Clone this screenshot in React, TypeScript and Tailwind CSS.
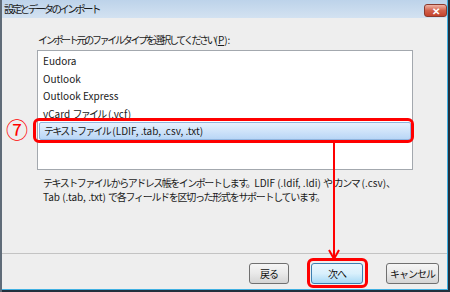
const items = ['Eudora', 'Outlook', 'Outlook Express', 'vCard ファイル (.vcf)', 'テキストファイル (LDIF, .tab, .csv, .txt)']

const CJK = /([\u3000-\u30ff\u4e00-\u9fff\uff00-\uffef]+)/

// Meiryo UI kana are narrower than Noto's full-width ones, so squeeze the CJK runs
function Jp({ text, cls = 'tracking-[-1.7px]' }: { text: string; cls?: string }) {
  return (
    <>
      {text.split(CJK).map((s, i) =>
        i % 2 ? (
          <span key={i} className={cls}>
            {s}
          </span>
        ) : (
          s
        ),
      )}
    </>
  )
}

function Btn({ label, w, primary = false }: { label: string; w: string; primary?: boolean }) {
  return (
    <div
      className={`${w} flex h-[21px] items-center justify-center rounded-[3px] border text-[10px] tracking-[-1px] text-[#111] ${
        primary
          ? 'border-[#3c7fb1] bg-gradient-to-b from-[#eaf6fd] via-[#d9f0fc] to-[#a7d9f5]'
          : 'border-[#707070] bg-gradient-to-b from-[#f6f6f6] via-[#e9e9e9] to-[#d4d4d4]'
      }`}
    >
      {label}
    </div>
  )
}

export default function App() {
  return (
    <div className="relative flex h-[292px] w-[450px] overflow-hidden bg-[#22303d] font-['Noto_Sans_CJK_JP',sans-serif]">
      <div className="w-[2px] bg-[#5f6b78]" />
      <div className="flex h-[290px] w-[446px] flex-col border-r border-b border-[#3fb0e2] bg-[#eeeeee]">
        {/* title bar */}
        <div className="flex h-[18px] items-center justify-between bg-gradient-to-b from-[#bdd3ea] to-[#d3e2f1] pl-[2px]">
          <span className="text-[10.5px] leading-none tracking-[-2.6px] text-[#1a1a1a]">設定とデータのインポート</span>
          <div className="mb-[1px] flex h-[13px] w-[23px] items-center justify-center self-end rounded-[3px] border border-[#8a3a2e] bg-gradient-to-b from-[#eeb3a6] via-[#d2614c] to-[#c4432c] text-[10px] font-bold leading-none text-white">
            ✕
          </div>
        </div>

        <div className="flex flex-1 flex-col">
          <div className="pl-[36px] pt-[14px] text-[10px] leading-[15px] text-[#1a1a1a]">
            <Jp text="インポート元のファイルタイプを選択してください" cls="tracking-[-2.3px]" />(
            <span className="underline">P</span>):
          </div>
          <div className="ml-[35px] mt-[3px] h-[120px] w-[376px] border border-[#a3a8ae] bg-white px-[1px] pt-[1px]">
            {items.map((it, i) => (
              <div
                key={it}
                className={`flex h-[17.5px] items-center whitespace-pre pl-[4px] text-[10px] text-[#1a1a1a] ${
                  i === 4 ? 'rounded-[2px] border border-[#8fb4de] bg-gradient-to-b from-[#e6f1fd] to-[#b9d6f6] pl-[3px]' : ''
                }`}
              >
                <Jp text={it} />
              </div>
            ))}
          </div>
          <div className="whitespace-pre pl-[41px] pt-[6px] text-[10px] leading-[14px] text-[#1a1a1a]">
            <div>
              <Jp text="テキストファイルからアドレス帳をインポートします。LDIF (.ldif, .ldi) や カンマ (.csv)、" cls="tracking-[-1.5px]" />
            </div>
            <div>
              <Jp text="Tab (.tab, .txt) で各フィールドを区切った形式をサポートしています。" cls="tracking-[-1.3px]" />
            </div>
          </div>
          <div className="flex-1" />
          <div className="border-t border-[#c3c3c3] shadow-[inset_0_1px_0_#ffffff]" />
          <div className="flex h-[35px] items-start pt-[9px]">
            <div className="ml-[247px]">
              <Btn label="戻る" w="w-[40px]" />
            </div>
            <div className="ml-[22px]">
              <Btn label="次へ" w="w-[52px]" primary />
            </div>
            <div className="ml-[23px]">
              <Btn label="キャンセル" w="w-[53px]" />
            </div>
          </div>
        </div>
      </div>

      {/* annotations */}
      <div className="absolute left-[6px] top-[117px] text-[22px] leading-none text-[#ff0000]">⑦</div>
      <div className="absolute left-[33px] top-[118px] h-[25px] w-[381px] rounded-[6px] border-[3px] border-[#ff0000]" />
      <svg className="absolute left-[327px] top-[141px]" width="14" height="122" viewBox="0 0 14 122">
        <line x1="7" y1="0" x2="7" y2="118" stroke="#ff0000" strokeWidth="2" />
        <polyline points="2,109 7,118 12,109" fill="none" stroke="#ff0000" strokeWidth="2" />
      </svg>
      <div className="absolute left-[307px] top-[258px] h-[30px] w-[61px] rounded-[6px] border-[3px] border-[#ff0000]" />
    </div>
  )
}
